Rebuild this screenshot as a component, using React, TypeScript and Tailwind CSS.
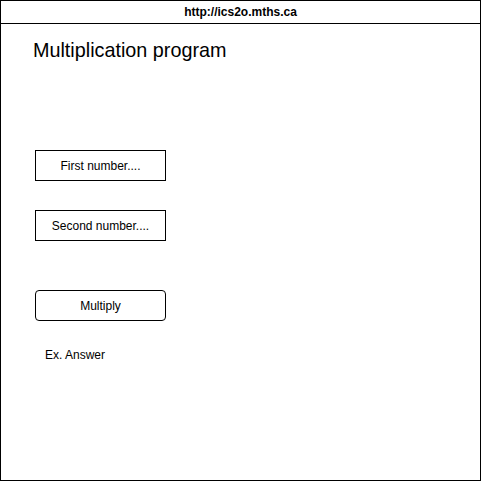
import React from 'react';

const App: React.FC = () => {
  return (
    <div className="w-[481px] h-[481px] bg-white" style={{ fontFamily: '"Liberation Sans", Arial, sans-serif' }}>
      <div className="w-[481px] h-[481px] border border-black flex flex-col">
        {/* Address bar */}
        <div className="h-[23px] border-b border-black flex items-center justify-center text-[12px] font-bold text-black">
          http://ics2o.mths.ca
        </div>

        {/* Page */}
        <div className="flex flex-col pl-[34px]">
          <h1 className="mt-[15px] text-[19.8px] leading-[23px] text-black -ml-[2px]">Multiplication program</h1>

          <div className="mt-[88px] w-[131px] h-[31px] border border-black flex items-center justify-center text-[12px] text-black">
            First number....
          </div>

          <div className="mt-[29px] w-[131px] h-[31px] border border-black flex items-center justify-center text-[12px] text-black">
            Second number....
          </div>

          <button className="mt-[49px] w-[131px] h-[31px] border border-black rounded-[4px] flex items-center justify-center text-[12px] text-black bg-white">
            Multiply
          </button>

          <div className="mt-[27px] pl-[10px] text-[12px] leading-[14px] text-black">Ex. Answer</div>
        </div>
      </div>
    </div>
  );
};

export default App;
